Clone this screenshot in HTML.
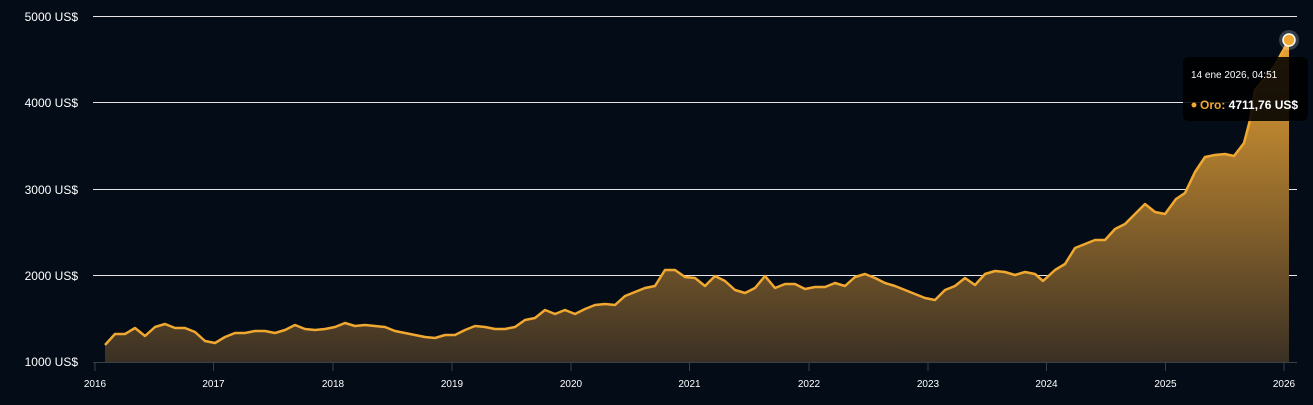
<!DOCTYPE html>
<html><head><meta charset="utf-8"><style>
html,body{margin:0;padding:0;background:#030c17;width:1313px;height:405px;overflow:hidden;font-family:"Liberation Sans",sans-serif}
</style></head><body>
<svg width="1313" height="405" viewBox="0 0 1313 405" xmlns="http://www.w3.org/2000/svg">
<defs>
<linearGradient id="g" x1="0" y1="40" x2="0" y2="362" gradientUnits="userSpaceOnUse">
<stop offset="0" stop-color="#e8a233"/>
<stop offset="1" stop-color="#3a3024"/>
</linearGradient>
</defs>
<g stroke="#e6e6e6" stroke-width="1">
<line x1="93" y1="16.5" x2="1297" y2="16.5"/>
<line x1="93" y1="102.5" x2="1297" y2="102.5"/>
<line x1="93" y1="189.5" x2="1297" y2="189.5"/>
<line x1="93" y1="275.5" x2="1297" y2="275.5"/>
</g>
<g font-size="12" fill="#ffffff" text-anchor="end">
<text x="78" y="21">5000 US$</text>
<text x="78" y="107">4000 US$</text>
<text x="78" y="194">3000 US$</text>
<text x="78" y="280">2000 US$</text>
<text x="78" y="366">1000 US$</text>
</g>
<path fill="url(#g)" d="M105,345 L115,334 125,334 135,328 145,336 155,327 165,324 175,328 185,328 195,332 205,341 215,343 225,337 235,333 245,333 255,331 265,331 275,333 285,330 295,325 305,329 315,330 325,329 335,327 345,323 355,326 365,325 375,326 385,327 395,331 405,333 415,335 425,337 435,338 445,335 455,335 465,330 475,326 485,327 495,329 505,329 515,327 525,320 535,318 545,310 555,314 565,310 575,314 585,309 595,305 605,304 615,305 625,296 635,292 645,288 655,286 665,270 675,270 685,277 695,278 705,286 715,276 725,281 735,290 745,293 755,288 765,276 775,288 785,284 795,284 805,289 815,287 825,287 835,283 845,286 855,277 865,274 875,278 885,283 895,286 905,290 915,294 925,298 935,300 945,290 955,286 965,278 975,285 985,274 995,271 1005,272 1015,275 1025,272 1035,274 1043,281 1055,270 1065,264 1075,248 1085,244 1095,240 1105,240 1115,229 1125,224 1135,214 1145,204 1155,212 1165,214 1176,199 1185,193 1195,172 1205,157 1215,155 1225,154 1234,156 1244,143 1250,120 1255,90 1265,78 1275,65 1289,40 L1289,362 L105,362 Z"/>
<polyline fill="none" stroke="#f0a830" stroke-width="2.5" stroke-linejoin="round" points="105,345 115,334 125,334 135,328 145,336 155,327 165,324 175,328 185,328 195,332 205,341 215,343 225,337 235,333 245,333 255,331 265,331 275,333 285,330 295,325 305,329 315,330 325,329 335,327 345,323 355,326 365,325 375,326 385,327 395,331 405,333 415,335 425,337 435,338 445,335 455,335 465,330 475,326 485,327 495,329 505,329 515,327 525,320 535,318 545,310 555,314 565,310 575,314 585,309 595,305 605,304 615,305 625,296 635,292 645,288 655,286 665,270 675,270 685,277 695,278 705,286 715,276 725,281 735,290 745,293 755,288 765,276 775,288 785,284 795,284 805,289 815,287 825,287 835,283 845,286 855,277 865,274 875,278 885,283 895,286 905,290 915,294 925,298 935,300 945,290 955,286 965,278 975,285 985,274 995,271 1005,272 1015,275 1025,272 1035,274 1043,281 1055,270 1065,264 1075,248 1085,244 1095,240 1105,240 1115,229 1125,224 1135,214 1145,204 1155,212 1165,214 1176,199 1185,193 1195,172 1205,157 1215,155 1225,154 1234,156 1244,143 1250,120 1255,90 1265,78 1275,65 1289,40"/>
<line x1="93" y1="362.5" x2="1297" y2="362.5" stroke="#3a3f47" stroke-width="1"/>
<g stroke="#3a3f47" stroke-width="1">
<line x1="95" y1="362" x2="95" y2="371"/><line x1="213.5" y1="362" x2="213.5" y2="371"/><line x1="333" y1="362" x2="333" y2="371"/><line x1="452" y1="362" x2="452" y2="371"/><line x1="571" y1="362" x2="571" y2="371"/><line x1="689.5" y1="362" x2="689.5" y2="371"/><line x1="809" y1="362" x2="809" y2="371"/><line x1="928" y1="362" x2="928" y2="371"/><line x1="1046.5" y1="362" x2="1046.5" y2="371"/><line x1="1165.5" y1="362" x2="1165.5" y2="371"/><line x1="1284" y1="362" x2="1284" y2="371"/>
</g>
<g font-size="10" fill="#ffffff" text-anchor="middle">
<text x="95" y="387">2016</text><text x="213.5" y="387">2017</text><text x="333" y="387">2018</text><text x="452" y="387">2019</text><text x="571" y="387">2020</text><text x="689.5" y="387">2021</text><text x="809" y="387">2022</text><text x="928" y="387">2023</text><text x="1046.5" y="387">2024</text><text x="1165.5" y="387">2025</text><text x="1284" y="387">2026</text>
</g>
<rect x="1183" y="57" width="125" height="64" rx="6" fill="#000" fill-opacity="0.88"/>
<text x="1191" y="78" font-size="10" fill="#fff">14 ene 2026, 04:51</text>
<circle cx="1194" cy="105" r="2.5" fill="#f0a830"/>
<text x="1200" y="109" font-size="12" font-weight="bold" fill="#f0a830">Oro: <tspan fill="#fff">4711,76 US$</tspan></text>
<circle cx="1289" cy="40" r="10" fill="#fff" fill-opacity="0.2"/>
<circle cx="1289" cy="40" r="6" fill="#f0a830" stroke="#fff" stroke-width="1.5"/>
</svg>
</body></html>
